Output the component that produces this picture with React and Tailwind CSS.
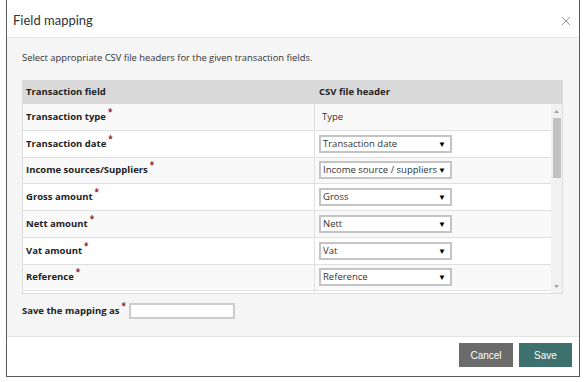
import React from "react";

const rows = [
  { label: "Transaction type", value: "Type", select: false },
  { label: "Transaction date", value: "Transaction date", select: true },
  { label: "Income sources/Suppliers", value: "Income source / suppliers", select: true },
  { label: "Gross amount", value: "Gross", select: true },
  { label: "Nett amount", value: "Nett", select: true },
  { label: "Vat amount", value: "Vat", select: true },
  { label: "Reference", value: "Reference", select: true },
  { label: "", value: "", select: false },
];

function Star() {
  return <span className="text-[#8b1a2b] text-[8px] relative -top-[5px] ml-[2px] font-bold">*</span>;
}

export default function App() {
  return (
    <div className="w-[585px] h-[382px] bg-white pl-[6px] pr-[5px] pb-[5px]" style={{ fontFamily: "'Open Sans', 'Noto Sans', sans-serif" }}>
      <div className="h-[377px] border-x border-b border-[#5a5a5a] flex flex-col">
        {/* Header */}
        <div className="h-[38px] shrink-0 flex items-center justify-between pl-[6px] pr-[7px] pt-[4px] border-b border-[#e6e6e6] bg-white">
          <span className="text-[13px] text-[#333]" style={{ fontFamily: "Lato, 'Open Sans', sans-serif" }}>Field mapping</span>
          <svg width="10" height="10" viewBox="0 0 10 10" className="mr-[1px]">
            <path d="M1 1 L9 9 M9 1 L1 9" stroke="#9a9a9a" strokeWidth="1" />
          </svg>
        </div>
        {/* Body */}
        <div className="flex-1 bg-[#f5f5f5] pl-[15px] pr-[15px] pt-[13px] border-b border-[#e3e3e3]">
          <div className="text-[9.4px] text-[#333] h-[14px] leading-[14px]">
            Select appropriate CSV file headers for the given transaction fields.
          </div>
          <div className="mt-[15px] w-[541px]">
            <div className="h-[24px] bg-[#d9d9d9] flex items-center text-[9.5px] font-bold text-[#222]">
              <div className="w-[293px] pl-[4px]">Transaction field</div>
              <div className="pl-[4px]">CSV file header</div>
            </div>
            <div className="h-[190px] flex border-x border-b border-[#dcdcdc] overflow-hidden">
              <div className="flex-1 overflow-hidden">
                {rows.map((r, i) => (
                  <div
                    key={i}
                    className={`h-[26.75px] shrink-0 flex border-b border-[#e0e0e0] ${i % 2 === 0 ? "bg-[#f9f9f9]" : "bg-white"}`}
                  >
                    <div className="w-[292px] pl-[3px] flex items-center border-r border-[#e0e0e0] text-[9.5px] font-bold text-[#222]">
                      {r.label}
                      {r.label && <Star />}
                    </div>
                    <div className="flex-1 pl-[4px] flex items-center text-[9.5px] text-[#333]">
                      {r.select ? (
                        <div className="w-[133px] h-[18px] border-2 border-[#c4c4c4] bg-white flex items-center justify-between pl-[2px] pr-[4px]">
                          <span>{r.value}</span>
                          <span className="text-[8px] text-black leading-none">▼</span>
                        </div>
                      ) : (
                        <span className="pl-[3px]">{r.value}</span>
                      )}
                    </div>
                  </div>
                ))}
              </div>
              <div className="w-[11px] bg-[#f1f1f1] flex flex-col items-center">
                <div className="h-[14px] flex items-center justify-center">
                  <svg width="5" height="3" viewBox="0 0 5 3"><path d="M0 3 L2.5 0 L5 3 Z" fill="#a3a3a3" /></svg>
                </div>
                <div className="w-[8px] h-[60px] bg-[#c1c1c1]" />
                <div className="flex-1" />
                <div className="h-[14px] flex items-center justify-center">
                  <svg width="5" height="3" viewBox="0 0 5 3"><path d="M0 0 L2.5 3 L5 0 Z" fill="#a3a3a3" /></svg>
                </div>
              </div>
            </div>
          </div>
          <div className="mt-[9px] flex items-center h-[16px]">
            <span className="text-[9.5px] font-bold text-[#222]">Save the mapping as</span>
            <Star />
            <div className="ml-[3px] w-[106px] h-[16px] border-2 border-[#cccccc] bg-white" />
          </div>
        </div>
        {/* Footer */}
        <div className="h-[39px] shrink-0 bg-white flex items-start justify-end pr-[7px] pt-[6px] gap-[6px]">
          <button className="w-[54px] h-[24px] bg-[#6b6b6b] text-white text-[10px]" style={{ fontFamily: "'Liberation Sans', Arial, sans-serif" }}>Cancel</button>
          <button className="w-[53px] h-[24px] bg-[#3c716e] text-white text-[10px]" style={{ fontFamily: "'Liberation Sans', Arial, sans-serif" }}>Save</button>
        </div>
      </div>
    </div>
  );
}
